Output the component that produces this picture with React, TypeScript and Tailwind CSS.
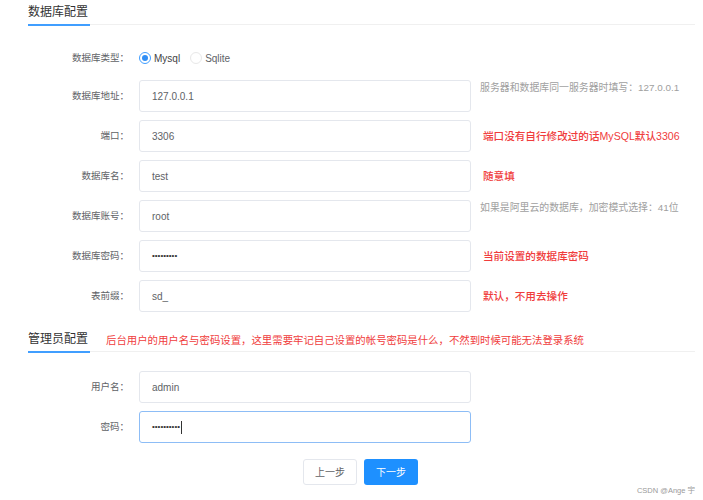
import React from "react";

const FONT = { fontFamily: '"Liberation Sans", Arial, "Noto Sans CJK SC", sans-serif' };

function SectionHeader({ title, note }: { title: string; note?: string }) {
  return (
    <div className="flex h-[26px] items-stretch">
      <div className="w-[62px] shrink-0 whitespace-nowrap border-b-2 border-[#409eff] text-[12px] leading-[24px] text-[#333]">
        {title}
      </div>
      <div className="flex-1 whitespace-nowrap border-b border-[#f0f0f0] pl-[16px] pt-[4px] text-[10.4px] leading-[20px] text-[#f03c3c] mb-[1px]">
        {note}
      </div>
    </div>
  );
}

function Row({
  label,
  value,
  hint,
  red,
  focused,
  password,
}: {
  label: string;
  value: string;
  hint?: string;
  red?: boolean;
  focused?: boolean;
  password?: boolean;
}) {
  return (
    <div className="flex items-center h-[32px]">
      <div className="w-[103px] text-right text-[9.5px] text-[#606266] pr-[2px]">{label}：</div>
      <div
        className={
          focused
            ? "ml-[8px] w-[332px] h-[32px] rounded-[3px] border border-[#8dbdf6] flex items-center pl-[12px] text-[10px] text-[#555]"
            : "ml-[8px] w-[332px] h-[32px] rounded-[3px] border border-[#e4e7ed] flex items-center pl-[12px] text-[10px] text-[#606266]"
        }
      >
        {password ? (
          <span className="text-[8px] text-[#333]">{value}</span>
        ) : (
          <span>{value}</span>
        )}
        {focused && <span className="ml-[1px] inline-block w-px h-[13px] bg-[#333]" />}
      </div>
      {hint && (
        <div
          className={
            red
              ? "ml-[12px] whitespace-nowrap text-[10.6px] text-[#f03c3c] font-medium pt-[2px]"
              : "ml-[9px] whitespace-nowrap text-[9.9px] text-[#a0a0a0] -mt-[16px]"
          }
        >
          {hint}
        </div>
      )}
    </div>
  );
}

export default function App() {
  return (
    <div className="relative w-[703px] h-[500px] bg-white overflow-hidden" style={FONT}>
      <div className="pl-[28px] pr-[8px]">
        <SectionHeader title="数据库配置" />
      </div>

      <div className="pl-[28px] mt-[18px] flex flex-col">
        <div className="flex items-center h-[28px]">
          <div className="w-[103px] text-right text-[9.5px] text-[#606266] pr-[2px]">数据库类型：</div>
          <div className="ml-[8px] flex items-center text-[10px] text-[#606266]">
            <span className="w-[12px] h-[12px] rounded-full border border-[#409eff] flex items-center justify-center bg-white">
              <span className="w-[6px] h-[6px] rounded-full bg-[#2f8ef5]" />
            </span>
            <span className="ml-[3px] text-[#444]">Mysql</span>
            <span className="ml-[10px] w-[12px] h-[12px] rounded-full border border-[#e8e8e8] bg-white" />
            <span className="ml-[3px]">Sqlite</span>
          </div>
        </div>

        <div className="mt-[8px] flex flex-col gap-[8px]">
          <Row label="数据库地址" value="127.0.0.1" hint="服务器和数据库同一服务器时填写：127.0.0.1" />
          <Row label="端口" value="3306" hint="端口没有自行修改过的话MySQL默认3306" red />
          <Row label="数据库名" value="test" hint="随意填" red />
          <Row label="数据库账号" value="root" hint="如果是阿里云的数据库，加密模式选择：41位" />
          <Row label="数据库密码" value="•••••••••" hint="当前设置的数据库密码" red password />
          <Row label="表前缀" value="sd_" hint="默认，不用去操作" red />
        </div>
      </div>

      <div className="pl-[28px] pr-[8px] mt-[15px]">
        <SectionHeader
          title="管理员配置"
          note="后台用户的用户名与密码设置，这里需要牢记自己设置的帐号密码是什么，不然到时候可能无法登录系统"
        />
      </div>

      <div className="pl-[28px] mt-[18px] flex flex-col gap-[8px]">
        <Row label="用户名" value="admin" />
        <Row label="密码" value="••••••••••" password focused />
      </div>

      <div className="pl-[303px] mt-[16px] flex gap-[7px]">
        <button className="w-[54px] h-[26px] rounded-[3px] border border-[#e4e7ed] bg-white text-[10px] text-[#606266]">
          上一步
        </button>
        <button className="w-[54px] h-[26px] rounded-[3px] bg-[#1e90ff] text-[10px] text-white">
          下一步
        </button>
      </div>

      <div className="absolute right-[8px] bottom-[4px] text-[7.5px] text-[#9a9a9a]">CSDN @Ange 宇</div>
    </div>
  );
}
